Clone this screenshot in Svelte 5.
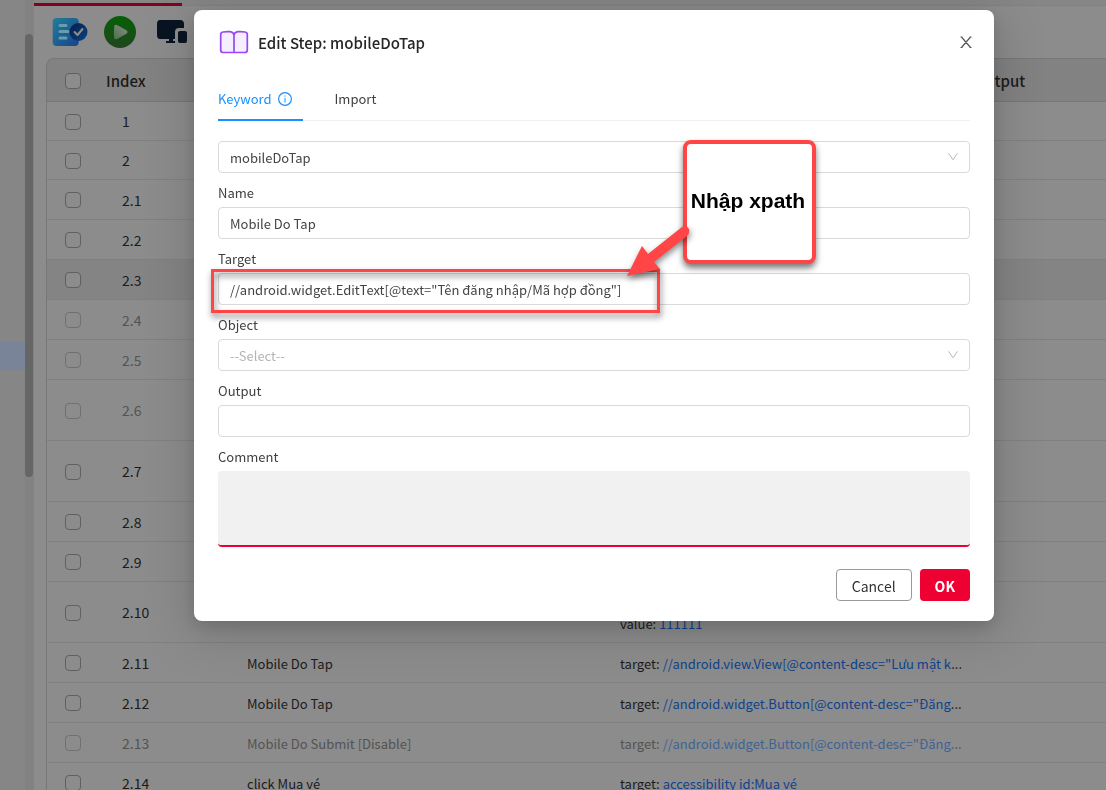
<script>
  const rows = [
    { index: '1', size: 'short' },
    { index: '2', size: 'short' },
    { index: '2.1' },
    { index: '2.2' },
    { index: '2.3', active: true },
    { index: '2.4', disabled: true },
    { index: '2.5', disabled: true },
    { index: '2.6', size: 'tall', disabled: true },
    { index: '2.7', size: 'tall' },
    { index: '2.8' },
    { index: '2.9' },
    { index: '2.10', size: 'tall', name: 'Mobile Do Tap', key: 'value', value: '111111' },
    { index: '2.11', name: 'Mobile Do Tap', key: 'target', value: '//android.view.View[@content-desc="Lưu mật k', more: true },
    { index: '2.12', name: 'Mobile Do Tap', key: 'target', value: '//android.widget.Button[@content-desc="Đăng', more: true },
    { index: '2.13', disabled: true, name: 'Mobile Do Submit [Disable]', key: 'target', value: '//android.widget.Button[@content-desc="Đăng', more: true },
    { index: '2.14', name: 'click Mua vé', key: 'target', value: 'accessibility id:Mua vé' }
  ];
  let keyword = $state('mobileDoTap');
  let name = $state('Mobile Do Tap');
  let target = $state('//android.widget.EditText[@text="Tên đăng nhập/Mã hợp đồng"]');
  let object = $state('');
  let output = $state('');
  let comment = $state('');
</script>

{#snippet chevron()}
  <svg class="chevron" width="12" height="12" viewBox="0 0 12 12" fill="none" stroke="#b8b8b8" aria-hidden="true">
    <path d="M1.5 2.3 6 8.700l4.500-6.400" />
  </svg>
{/snippet}

<div class="page">
  <aside>
    <div class="tree"><div class="selected"></div></div>
    <div class="track"><div class="thumb"></div></div>
  </aside>
  <main>
    <div class="tabstrip"><div class="current"></div></div>
    <div class="toolbar">
      <button aria-label="Test case">
        <svg width="36" height="30" viewBox="0 0 36 30">
          <defs>
            <linearGradient id="doc" x1="0" y1="0" x2="1" y2="1"><stop stop-color="#257c98" /><stop offset="1" stop-color="#15458c" /></linearGradient>
            <linearGradient id="badge" x1="0" y1="0" x2="1" y2="1"><stop stop-color="#071d4b" /><stop offset="1" stop-color="#0c4382" /></linearGradient>
          </defs>
          <rect x="0.700" y="1" width="26" height="28" rx="4" fill="url(#doc)" />
          <path d="M8 8.500h6M8 14.500h8M8 21h6" stroke="#679dad" stroke-width="3" stroke-linecap="round" />
          <circle cx="26.500" cy="15" r="9" fill="url(#badge)" />
          <path d="m22.500 15 3 3 5-6" fill="none" stroke="#8c8c8c" stroke-width="2" stroke-linecap="round" stroke-linejoin="round" />
        </svg>
      </button>
      <button aria-label="Run">
        <svg width="32" height="32" viewBox="0 0 32 32">
          <defs>
            <linearGradient id="run" x1="0" y1="0" x2="0" y2="1"><stop stop-color="#066004" /><stop offset="1" stop-color="#20461f" /></linearGradient>
            <linearGradient id="play" x1="1" y1="0" x2="0" y2="1"><stop stop-color="#8c8c8c" /><stop offset="1" stop-color="#4c7149" /></linearGradient>
          </defs>
          <circle cx="16" cy="16" r="16" fill="url(#run)" />
          <path d="M10 11q0-3 3-2l9 5q3 2 0 4l-9 5q-3 1-3-2z" fill="url(#play)" />
        </svg>
      </button>
      <button class="device" aria-label="Devices">
        <svg width="32" height="26" viewBox="0 0 32 26" fill="#091422">
          <path d="M4 1h20q4 0 4 4v4h-5q-4 0-4 4v7h-2v2h2v2h-9v-2h3v-2H4q-3 0-3-4V5q0-4 3-4z" />
          <rect x="22" y="12" width="9" height="12" rx="2" />
        </svg>
      </button>
    </div>
    <table>
      <thead>
        <tr>
          <th class="check"><input type="checkbox" aria-label="Select all" /></th>
          <th class="index">Index</th>
          <th class="name"></th>
          <th class="data"></th>
          <th>Output</th>
        </tr>
      </thead>
      <tbody>
        {#each rows as row}
          <tr class={row.size} class:active={row.active} class:disabled={row.disabled}>
            <td class="check"><input type="checkbox" aria-label={row.index} /></td>
            <td class="index">{row.index}</td>
            <td class="name">{row.name ?? ''}</td>
            <td class="data" class:second={row.key === 'value'}>
              {#if row.key}{row.key}: <a href="#step">{row.value}</a>{#if row.more}...{/if}{/if}
            </td>
            <td></td>
          </tr>
        {/each}
      </tbody>
    </table>
  </main>
</div>

<div class="mask">
  <div class="modal" role="dialog" aria-labelledby="title">
    <header>
      <svg width="32" height="26" viewBox="0 0 32 26" fill="#f5eefe" stroke="#9747f5" stroke-width="1.700" stroke-linejoin="round" aria-hidden="true">
        <path d="M16 23.500V6q-.5-3-4-3.300Q8 2.500 5 3 2.700 3.200 2.700 5.500v15.500q0 2.500 2.500 2.500zM16 23.500V6q.5-3 4-3.300 4-.2 7 .3 2.300.2 2.300 2.500v15.500q0 2.500-2.500 2.500z" />
      </svg>
      <h1 id="title">Edit Step: mobileDoTap</h1>
      <button class="close" aria-label="Close">
        <svg width="14" height="14" viewBox="0 0 14 14" fill="none" stroke="#555" stroke-width="1.200"><path d="m2.500 2 9 10.500M11.500 2l-9 10.500M1.500 2h2M10.500 2h2M1.500 12.500h2M10.500 12.500h2" /></svg>
      </button>
    </header>
    <nav>
      <button class="tab on">Keyword
        <svg width="14" height="14" viewBox="0 0 14 14" fill="none" stroke="#1890ff" aria-hidden="true"><circle cx="7" cy="7" r="6.400" stroke-width="1.200" /><path d="M7 6v4.500M7 3.500v1.200" /></svg>
      </button>
      <button class="tab">Import</button>
    </nav>
    <form onsubmit={(e) => e.preventDefault()}>
      <div class="control">
        <select bind:value={keyword} aria-label="Keyword"><option>mobileDoTap</option></select>
        {@render chevron()}
      </div>
      <label for="name">Name</label>
      <input id="name" type="text" bind:value={name} />
      <label for="target">Target</label>
      <div class="control">
        <input id="target" type="text" bind:value={target} />
        <div class="highlight"></div>
        <div class="callout">Nhập xpath</div>
        <svg class="arrow" width="72" height="60" viewBox="0 0 72 60" fill="#ff4545" aria-hidden="true">
          <path d="M5 53 20 23l6 8L60 4q5-2 7 2 1 4-2 7L32 39l6 7z" />
        </svg>
      </div>
      <label for="object">Object</label>
      <div class="control">
        <select id="object" class="empty" bind:value={object}><option value="">--Select--</option></select>
        {@render chevron()}
      </div>
      <label for="output">Output</label>
      <input id="output" type="text" bind:value={output} />
      <label for="comment">Comment</label>
      <textarea id="comment" bind:value={comment}></textarea>
      <footer>
        <button class="cancel" type="button">Cancel</button>
        <button class="ok" type="submit">OK</button>
      </footer>
    </form>
  </div>
</div>

<style>
  :global(body) { overflow: hidden; background: #8c8c8c; }
  :global(*) { box-sizing: border-box; }
  .page, .mask, button, input, select, textarea { font-family: "Noto Sans CJK SC", "Noto Sans", sans-serif; font-size: 13px; }
  button { border: 0; padding: 0; background: none; cursor: pointer; }
  svg { display: block; }

  .page { display: flex; height: 100vh; overflow: hidden; color: #1b1b1b; background: #8c8c8c; }
  aside { display: flex; flex: none; width: 34px; background: #828282; }
  .tree { flex: 1; padding-top: 342px; background: #868686; }
  .selected { height: 28px; background: #7a8498; }
  .track { width: 9px; padding-top: 34px; }
  .thumb { width: 8px; height: 443px; border-radius: 4px; background: #666; }
  main { flex: 1; min-width: 0; }
  .tabstrip { height: 6px; padding-top: 3px; background: #868686; border-bottom: 1px solid #828282; }
  .current { width: 148px; height: 3px; background: #84001f; }
  .toolbar { display: flex; align-items: center; gap: 16px; height: 52px; padding-left: 18px; }
  .device { padding-left: 4px; }

  table { width: calc(100% - 12px); margin-left: 12px; border-collapse: separate; border-spacing: 0; table-layout: fixed; border-left: 1px solid #777; border-top: 1px solid #777; border-top-left-radius: 8px; overflow: hidden; }
  th { height: 43px; padding: 2px 0 0; font-size: 15px; line-height: 24px; font-weight: 500; text-align: left; background: #828282; border-bottom: 1px solid #777; }
  td { height: 40px; padding: 2px 0 0; line-height: 22px; border-bottom: 1px solid #808080; white-space: nowrap; }
  .short td { height: 39px; }
  .tall td { height: 61px; }
  .active td { background: #848484; }
  .check { width: 59px; padding-left: 18px; padding-top: 1px; }
  th.index { width: 141px; }
  td.index { padding: 0 0 0 16px; font-size: 14px; }
  th.name { width: 373px; }
  th.data { width: 354px; }
  .second { padding-top: 24px; }
  .disabled td { color: #535353; }
  a { color: #0e438c; text-decoration: none; }
  .disabled a { color: #3f6494; }
  input[type="checkbox"] { display: block; width: 16px; height: 16px; margin: 0; appearance: none; border: 1px solid #606060; border-radius: 4px; background: #8c8c8c; }
  .disabled input[type="checkbox"] { border-color: #707070; }

  .mask { position: fixed; inset: 0; display: flex; align-items: flex-start; padding: 10px 112px 0 194px; color: #404040; }
  .modal { flex: 1; min-width: 0; padding: 18px 24px 20px; border-radius: 8px; background: #fff; box-shadow: 0 6px 16px #0002, 0 9px 48px 8px #0002; }
  header { display: flex; align-items: center; gap: 8px; height: 28px; }
  h1 { flex: 1; margin: 0; padding-top: 2px; font-size: 15px; line-height: 24px; font-weight: 500; color: #262626; }
  .close { margin-right: -3px; }
  nav { display: flex; gap: 32px; height: 47px; margin: 18px 0 20px; border-bottom: 1px solid #f0f0f0; }
  .tab { display: flex; align-items: center; gap: 6px; height: 47px; padding: 2px 0 0; color: #404040; }
  .on { padding: 4px 11px 0 0; color: #1890ff; border-bottom: 2px solid #1890ff; }
  form { display: flex; flex-direction: column; }
  label { height: 34px; padding-top: 9px; line-height: 22px; }
  .control { position: relative; display: flex; }
  input[type="text"], select { width: 100%; height: 32px; margin: 0; padding: 0 11px; color: #444; background: #fff; border: 1px solid #d9d9d9; border-radius: 4px; appearance: none; outline: 0; }
  select.empty { color: #b4b4b4; }
  .chevron { position: absolute; right: 11px; top: 10px; pointer-events: none; }
  textarea { display: block; width: 100%; height: 76px; margin: 0; padding: 8px 11px; resize: none; background: #f1f1f1; border: 0; border-bottom: 2px solid #ee0033; border-radius: 4px; outline: 0; }
  footer { display: flex; justify-content: flex-end; gap: 8px; margin-top: 22px; }
  footer button { height: 32px; padding: 1px 15px 0; border-radius: 4px; font-size: 14px; }
  .cancel { border: 1px solid #999; color: #333; }
  .ok { background: #ee0033; color: #fff; font-weight: 700; }

  .highlight { position: absolute; left: -7px; top: -4px; width: 449px; height: 44px; border: 3px solid #ff4545; filter: drop-shadow(1px 4px 3px #0008); pointer-events: none; }
  .callout { position: absolute; left: 465px; top: -133px; display: grid; place-items: center; width: 133px; height: 124px; padding: 0 3px 2px 0; border: 4px solid #ff4545; border-radius: 8px; background: #fff; color: #000; font: bold 21px "Liberation Sans", Arial, sans-serif; white-space: nowrap; box-shadow: 0 4px 6px #0008; }
  .arrow { position: absolute; left: 404px; top: -50px; filter: drop-shadow(1px 3px 3px #0007); pointer-events: none; }
</style>
